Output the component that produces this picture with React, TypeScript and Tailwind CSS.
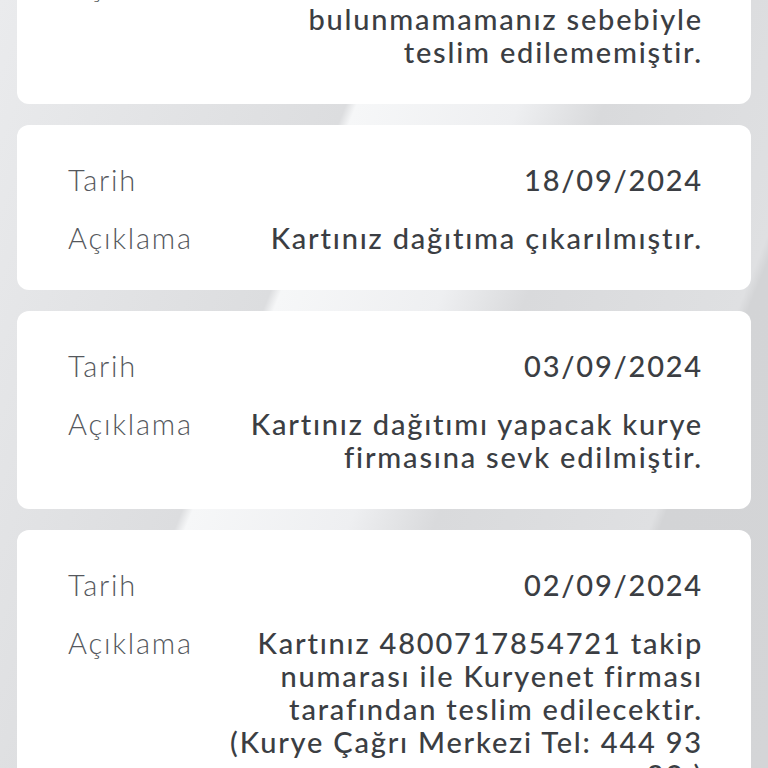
const items = [
  {
    date: "25/09/2024",
    text: ["Kartınız adreste", "bulunmamamanız sebebiyle", "teslim edilememiştir."],
  },
  { date: "18/09/2024", text: ["Kartınız dağıtıma çıkarılmıştır."] },
  {
    date: "03/09/2024",
    text: ["Kartınız dağıtımı yapacak kurye", "firmasına sevk edilmiştir."],
  },
  {
    date: "02/09/2024",
    text: [
      "Kartınız 4800717854721 takip",
      "numarası ile Kuryenet firması",
      "tarafından teslim edilecektir.",
      "(Kurye Çağrı Merkezi Tel: 444 93",
      "93 )",
    ],
  },
];

function Row({ label, children }: { label: string; children: React.ReactNode }) {
  return (
    <div className="flex justify-between gap-2">
      <span className="shrink-0 font-light text-[#55585d]">{label}</span>
      <span className="text-right font-medium text-[#3b3e43]">{children}</span>
    </div>
  );
}

export default function App() {
  return (
    <div
      className="h-[768px] w-[768px] overflow-hidden bg-[#e2e3e5] bg-[linear-gradient(112deg,#eaebed_0%,#dcdddf_36%,#f6f7f8_37%,#eeeff1_52%,#d9dadc_60%,#dfe0e2_80%,#d3d4d6_81%,#d4d5d7_100%)] px-[17px] text-[29px] leading-[33px] tracking-[1.8px]"
      style={{ fontFamily: "Lato, 'Open Sans', sans-serif" }}
    >
      <div className="-mt-[127px] flex flex-col gap-[21px]">
        {items.map((it) => (
          <div
            key={it.date}
            className="flex flex-col gap-[25px] rounded-xl bg-white pb-[36px] pl-[51px] pr-[48px] pt-[38px]"
          >
            <Row label="Tarih">{it.date}</Row>
            <Row label="Açıklama">
              {it.text.map((line) => (
                <div key={line} className="whitespace-nowrap">
                  {line}
                </div>
              ))}
            </Row>
          </div>
        ))}
      </div>
    </div>
  );
}
